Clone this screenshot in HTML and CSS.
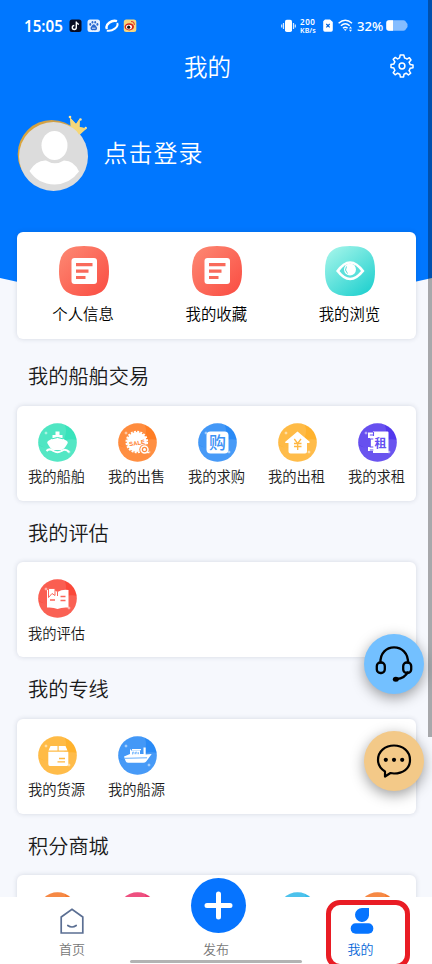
FILE: index.html
```html
<!DOCTYPE html>
<html lang="zh-CN">
<head>
<meta charset="utf-8">
<meta name="viewport" content="width=device-width, initial-scale=1">
<title>我的</title>
<link rel="stylesheet" href="styles.css">
</head>
<body>
<svg class="defs" width="0" height="0" aria-hidden="true">
  <defs>
    <linearGradient id="g-red" x1="0" y1="0" x2="1" y2="1"><stop offset="0" stop-color="#fd8a74"/><stop offset="1" stop-color="#fa4b41"/></linearGradient>
    <linearGradient id="g-teal" x1="0.1" y1="0" x2="0.9" y2="1"><stop offset="0" stop-color="#a5f5ea"/><stop offset="1" stop-color="#1ccfce"/></linearGradient>
    <linearGradient id="g-gold" x1="0" y1="0" x2="1" y2="0"><stop offset="0" stop-color="#dba53c"/><stop offset="1" stop-color="#c49a50"/></linearGradient>
    <clipPath id="orb"><circle cx="19.5" cy="19.5" r="19.3"/></clipPath>
    <symbol id="shine" viewBox="0 0 39 39">
      <g clip-path="url(#orb)" fill="#fff">
        <circle cx="11" cy="8" r="17" fill-opacity=".12"/>
        <path d="M0 39V22Q10 28 20 22Q29 14 39 17V39Z" fill-opacity=".14"/>
        <path fill-opacity=".75" d="M8 8l.5 1.500L10 10l-1.500 .5L8 12l-.5-1.500L6 10l1.500-.5zM31 27l.5 1.500L33 29l-1.500 .5L31 31l-.5-1.500L29 29l1.500-.5z"/>
      </g>
    </symbol>
    <symbol id="article" viewBox="0 0 50 50">
      <path d="M25 0C43 0 50 7 50 25S43 50 25 50 0 43 0 25 7 0 25 0Z" fill="url(#g-red)"/>
      <rect x="12.500" y="12" width="25.500" height="26" rx="3" fill="#fff"/>
      <path d="M17 17h16.500v3.200H17zM17 23.500h12.500v3.200H17zM17 30h9.500v3H17z" fill="#f96a5b"/>
    </symbol>
  </defs>
</svg>

<div class="screen">
  <header class="hero">
    <svg class="hero-curve" viewBox="0 0 432 304" preserveAspectRatio="none"><path d="M0 0H432V278Q216 329 0 278Z" fill="#0077ff"/></svg>
    <div class="status">
      <span class="clock">15:05</span>
      <svg class="apps" width="68" height="14" viewBox="0 0 68 14">
        <rect x=".5" y=".5" width="12" height="12.500" rx="2.500" fill="#080b20"/>
        <path d="M7.300 2.500v6a2 2 0 1 1-2-2M7.300 3q.5 2.200 2.700 2.400" fill="none" stroke="#fff" stroke-width="1.400"/>
        <rect x="18.500" y=".5" width="12.500" height="12.500" rx="2.500" fill="#e6f1ff"/>
        <g fill="#2868cf"><ellipse cx="21.300" cy="5.400" rx="1" ry="1.400"/><ellipse cx="23.500" cy="3.200" rx=".9" ry="1.300"/><ellipse cx="26.200" cy="3.200" rx=".9" ry="1.300"/><ellipse cx="28.400" cy="5.400" rx="1" ry="1.400"/><path d="M24.800 5.300q1.200 0 2.300 2 1.600 1.500.8 3-.8 1.300-3.100.7-2.300.6-3.100-.7-.8-1.500.8-3 1.100-2 2.300-2z"/></g>
        <path d="M23 9.200h3.500" stroke="#fff" stroke-width=".8"/>
        <g fill="none" stroke="#fff"><path d="M38 10C35.500 5.500 43 .5 48 2.200" stroke-width="2.400"/><path d="M48.200 4C50 7.500 43.500 13 37.800 11.600" stroke-width="2"/></g>
        <rect x="54.800" y=".5" width="12.500" height="12.500" rx="2.500" fill="#f7d57b"/>
        <ellipse cx="60.300" cy="7.800" rx="4.700" ry="3.600" fill="#d8261c"/><ellipse cx="60" cy="8.100" rx="3" ry="2.300" fill="#fff"/><circle cx="59.700" cy="8.200" r="1.600" fill="#111"/>
        <path d="M62 2.500q3.500-.2 3.300 3.500" fill="none" stroke="#e3442d" stroke-width="1.100"/>
      </svg>
      <span class="grow"></span>
      <svg width="15" height="14" viewBox="0 0 15 14"><rect x="4" y=".8" width="7" height="12.200" rx="1.800" fill="#fff"/><path d="M2.500 4v6M12.500 4v6M.7 5.500v3M14.300 5.500v3" stroke="#d5e9ff" stroke-width="1.200"/></svg>
      <span class="speed"><b>200</b><b>KB/s</b></span>
      <svg class="sim" width="10" height="13" viewBox="0 0 10 13"><path d="M2 .5h5L9.800 3v8a1.700 1.700 0 0 1-1.700 1.700H1.900A1.700 1.700 0 0 1 .2 11V2.200z" fill="#fff"/><path d="M3.300 5l3.400 3.400M6.700 5L3.300 8.400" stroke="#0063dc" stroke-width="1.200"/></svg>
      <svg class="wifi" width="15" height="13" viewBox="0 0 15 13"><g fill="none" stroke="#fff" stroke-width="1.500"><path d="M.6 4.200Q7.300-1.800 14 4.200M2.900 6.800q4.400-4 8.800 0M5 9.200q2.300-2 4.600 0"/></g><path d="M5.800 10.200h3L7.300 12z" fill="#fff"/><path d="M12.500 7.500l1.500 2h-3zM12.500 12.700l1.500-2h-3z" fill="#fff"/></svg>
      <span class="percent">32%</span>
      <svg class="battery" width="22" height="11" viewBox="0 0 22 11"><path d="M3 .2h14.500Q19.500.2 20 2l1.500 2v3L20 9q-.5 1.800-2.500 1.800H3Q.3 10.800.3 8V3Q.3.2 3 .2z" fill="#85bdff"/><path d="M7 .2H3Q.3.200.3 3v5q0 2.800 2.700 2.800h4z" fill="#fff"/></svg>
    </div>
    <div class="titlebar">
      <h1>我的</h1>
      <svg class="gear" width="24" height="24" viewBox="-12 -12 24 24"><path d="M-1.800-11H1.800L2.600-8Q4-7.700 5-6.900L7.400-8.300 9-6 7.100-3.700Q7.900-2.500 8.100-1.600L11-1V1.800L8.100 2.300Q7.700 3.700 7 4.700L8.700 7.200 6.400 9 4.200 7.200Q3.200 7.900 2 8.200L1.600 11H-1.600L-2.200 8.200Q-3.400 7.900-4.400 7.200L-6.800 8.800-8.800 6.700-7.100 4.400Q-7.800 3.300-8.100 2.100L-11 1.600V-1.400L-8.100-2Q-7.800-3.200-7.100-4.200L-8.800-6.600-6.700-8.600-4.400-7Q-3.500-7.700-2.400-8.100Z" fill="none" stroke="#fff" stroke-width="1.500" stroke-linejoin="round"/><circle r="2.900" fill="none" stroke="#fff" stroke-width="1.500"/></svg>
    </div>
    <div class="profile">
      <svg class="avatar" width="72" height="78" viewBox="0 0 72 78">
        <circle cx="34.700" cy="39" r="34" fill="url(#g-gold)"/>
        <path d="M48 8.700L53.500 11 53 2.500 59 9 62.800 3.500 62.500 12 69.500 13.500 61 21.500Q56 12 48 8.700Z" fill="#f5d779"/>
        <g fill="#ffe79b"><circle cx="53" cy="2" r="1.300"/><circle cx="63.500" cy="4.500" r="1.200"/><circle cx="68.700" cy="13" r="1.200"/></g>
        <circle cx="36.500" cy="41.500" r="34.500" fill="#dcdcdc"/>
        <path d="M50 7.500L54 10 53 2.500 59 9 62.800 3.500 62.500 12 69.500 13.500 62 19.500Q57 11.500 50 7.500Z" fill="#f5d779"/>
        <ellipse cx="37.500" cy="30.500" rx="13" ry="14.500" fill="#fff"/>
        <path d="M12.500 56Q19 45 29 45.500 38 51 47 45.500 57 45.500 62 56.500 53 69 37.500 69.500 21 69 12.500 56Z" fill="#fff"/>
      </svg>
      <a class="login">点击登录</a>
    </div>
  </header>

  <section class="card quick">
    <a><svg width="50" height="50"><use href="#article"/></svg>个人信息</a>
    <a><svg width="50" height="50"><use href="#article"/></svg>我的收藏</a>
    <a><svg width="50" height="50" viewBox="0 0 50 50"><path d="M25 0C43 0 50 7 50 25S43 50 25 50 0 43 0 25 7 0 25 0Z" fill="url(#g-teal)"/><path d="M11 25Q25 5.500 39.500 25 25 43.500 11 25Z" fill="#fff"/><path d="M14.500 25Q25 10.500 36 25 25 38.500 14.500 25Z" fill="#5be0db"/><circle cx="25" cy="23.500" r="6" fill="#fff"/><path d="M21.500 20.500q-2.500 3.500 1 7" fill="none" stroke="#59ddd7" stroke-width="1"/></svg>我的浏览</a>
  </section>

  <h2>我的船舶交易</h2>
  <section class="card grid">
    <a><svg width="39" height="39" viewBox="0 0 39 39"><circle cx="19.500" cy="19.500" r="19.300" fill="#38e3bb"/><use href="#shine"/><path d="M17.500 8.500h4V12h3v3.500l4.500 2.500q1.300 1 .5 2.500-3 5.500-6 6.500h-8q-3-1-6-6.500-.8-1.500.5-2.500l4.500-2.500V12h3z" fill="#fff"/><path d="M14 15.800q5.500-2.600 11 0" fill="none" stroke="#38e3bb"/><path d="M8.500 28q3-3.300 7 0 4 2.500 8 0 4-3 7.500 1" fill="none" stroke="#fff" stroke-width="2"/></svg>我的船舶</a>
    <a><svg width="39" height="39" viewBox="0 0 39 39"><circle cx="19.500" cy="19.500" r="19.300" fill="#ff7d24"/><use href="#shine"/><circle cx="18.800" cy="19" r="10" fill="#fff"/><circle cx="18.800" cy="19" r="10.300" fill="none" stroke="#fff" stroke-width="2" stroke-dasharray="2 1.240"/><text x="19" y="22" text-anchor="middle" class="sale" transform="rotate(-10 19 20)">SALE</text><circle cx="26.500" cy="26.500" r="5.200" fill="#ff8d42"/><circle cx="26.500" cy="26.500" r="3.500" fill="none" stroke="#fff" stroke-width="1.500"/><circle cx="26.500" cy="26.500" r="1.500" fill="#fff"/><path d="M28 29.500h3" stroke="#fff" stroke-width="1.300"/></svg>我的出售</a>
    <a><svg width="39" height="39" viewBox="0 0 39 39"><circle cx="19.500" cy="19.500" r="19.300" fill="#298af6"/><use href="#shine"/><rect x="8.500" y="8.500" width="22" height="22" rx="4" fill="#fff"/><text x="19.500" y="25.700" text-anchor="middle" class="glyph buy">购</text></svg>我的求购</a>
    <a><svg width="39" height="39" viewBox="0 0 39 39"><circle cx="19.500" cy="19.500" r="19.300" fill="#ffb22d"/><use href="#shine"/><path d="M19.500 8.500L32 19l-1 1h-2v8.500q0 2-2 2H12.500q-2 0-2-2V20h-3l-.5-1z" fill="#fff"/><path d="M16.300 16l3.400 4.500 3.300-4.500M16 20.500h7.500M16 23.500h7.500M19.700 20.500v6.500" fill="none" stroke="#ffb741" stroke-width="1.300"/></svg>我的出租</a>
    <a><svg width="39" height="39" viewBox="0 0 39 39"><circle cx="19.500" cy="19.500" r="19.300" fill="#5238ed"/><use href="#shine"/><path d="M10 9.500h5V8.500h14.500q1 0 1 1V30H15v-2h-5v-4h2v-9h-2z" fill="#fff"/><path d="M15.300 12h-3.500M15.300 16h-3v8h3M15.300 27h-3.500M15.500 9v4" fill="none" stroke="#6450f2" stroke-width="1.100"/><text x="22.500" y="24.500" text-anchor="middle" class="glyph rent">租</text></svg>我的求租</a>
  </section>

  <h2>我的评估</h2>
  <section class="card grid">
    <a><svg width="39" height="39" viewBox="0 0 39 39"><circle cx="19.500" cy="19.500" r="19.300" fill="#fa4839"/><use href="#shine"/><path d="M9 11q6-1.500 10.500 2 5-3 11-2v17.500q-7-.5-11 1.500-4-2-10.500-1.500z" fill="#fff"/><path d="M19.500 13v4M10.500 9.500h6.500v7l-3-2-3.500 4z" fill="#fff" stroke="#fb665b" stroke-width="1"/><path d="M12 21h5M22.500 17.500h5M22.500 21.500h5" stroke="#fb665b" stroke-width="1.400"/></svg>我的评估</a>
  </section>

  <h2>我的专线</h2>
  <section class="card grid">
    <a><svg width="39" height="39" viewBox="0 0 39 39"><circle cx="19.500" cy="19.500" r="19.300" fill="#ffb22d"/><use href="#shine"/><path d="M12.500 10h7v4.500h-9zM20.700 10h6.800l2 4.500h-8.800zM10.300 15.800h20V28q0 2-1.500 2h-17q-1.500 0-1.500-2z" fill="#fff"/><path d="M21 22.500h6M19.500 25.800h7.500" stroke="#ffb741" stroke-width="1.300"/></svg>我的货源</a>
    <a><svg width="39" height="39" viewBox="0 0 39 39"><circle cx="19.500" cy="19.500" r="19.300" fill="#298af6"/><use href="#shine"/><path d="M6 20.500l6-2.500V13.500h1V14.500h9V18h3.500v-6.500h2.200v7l6-.5-5.500 7.500q-1 1.300-3 1.300H10q-2 0-2.500-2zM14 13h9v1.200h-9z" fill="#fff"/><path d="M6.500 22.300l22.500-.5" stroke="#64aefd"/><path d="M14.500 18.500V16.200h1.500v2m1.500 0v-2H19v2m1.500 0v-2" fill="none" stroke="#64aefd" stroke-width=".8"/></svg>我的船源</a>
  </section>

  <h2>积分商城</h2>
  <section class="card grid">
    <a><svg width="39" height="39" viewBox="0 0 39 39"><circle cx="19.500" cy="19.500" r="19.300" fill="#f5792c"/><use href="#shine"/></svg></a>
    <a><svg width="39" height="39" viewBox="0 0 39 39"><circle cx="19.500" cy="19.500" r="19.300" fill="#ec386f"/><use href="#shine"/></svg></a>
    <a></a>
    <a><svg width="39" height="39" viewBox="0 0 39 39"><circle cx="19.500" cy="19.500" r="19.300" fill="#35baea"/><use href="#shine"/></svg></a>
    <a><svg width="39" height="39" viewBox="0 0 39 39"><circle cx="19.500" cy="19.500" r="19.300" fill="#f5792c"/><use href="#shine"/></svg></a>
  </section>

  <div class="float service"><svg width="60" height="60" viewBox="0 0 60 60" fill="none" stroke="#000" stroke-width="2.300"><path d="M16.500 29.500C15 8 45 8 44 29.500M44 37.500Q41 44.500 32.500 45"/><rect x="12.800" y="28.500" width="8" height="10.500" rx="3.600"/><rect x="39.200" y="28.500" width="8" height="10.500" rx="3.600"/><ellipse cx="31.800" cy="45.200" rx="3" ry="2.500" fill="#000" stroke="none"/></svg></div>
  <div class="float chat"><svg width="60" height="60" viewBox="0 0 60 60"><path d="M21 40.500Q14 36 14 29C14 20 21.500 14.500 30 14.500S46 20 46 29 38.500 42.500 30 42.500L26.500 42 21 45.500Z" fill="none" stroke="#000" stroke-width="2.200" stroke-linejoin="round"/><circle cx="21.800" cy="28.800" r="2.100"/><circle cx="30" cy="28.800" r="2.100"/><circle cx="38.200" cy="28.800" r="2.100"/></svg></div>

  <nav class="tabs">
    <a><svg width="28" height="28" viewBox="0 0 28 28" fill="none" stroke="#5b6f93" stroke-width="1.700"><path d="M3.200 26V10L14 2.200 24.800 10V26Z"/><path d="M9.800 18.500q4.200 3 8.400 0" stroke-linecap="round"/></svg>首页</a>
    <a><span class="plus"><svg width="55" height="55" viewBox="0 0 55 55"><path d="M27.500 16v23M16 27.500h23" stroke="#fff" stroke-width="5" stroke-linecap="round"/></svg></span>发布</a>
    <a class="active"><svg width="28" height="28" viewBox="0 0 28 28" fill="#0674ff"><path d="M15.500 1H22V8.500A7 7 0 1 1 15.500 1Z"/><rect x="3.700" y="16.300" width="22.600" height="10.500" rx="5"/></svg>我的</a>
  </nav>
  <div class="home-bar"></div>
  <div class="marker"></div>
  <div class="scrollbar"></div>
</div>
</body>
</html>
```

FILE: styles.css
```css
* { box-sizing: border-box; }

body {
  margin: 0;
  background: #f6f8fd;
  color: #1a1a1a;
  font-family: "Noto Sans CJK SC", sans-serif;
  font-weight: 350;
}

.defs { position: absolute; }
svg { display: block; flex: none; }

.screen {
  position: relative;
  width: 432px;
  height: 964px;
  overflow: hidden;
}

.hero {
  position: relative;
  height: 231.500px;
  color: #fff;
}

.hero-curve {
  position: absolute;
  top: 0;
  left: 0;
  width: 432px;
  height: 304px;
}

.status {
  position: relative;
  display: flex;
  align-items: center;
  height: 51px;
  padding: 0 24px;
  font-family: "Noto Sans", sans-serif;
  font-weight: 500;
}

.clock { width: 45px; font-size: 15.200px; font-weight: 600; }
.grow { flex: 1; }
.speed { display: flex; flex-direction: column; gap: 1px; width: 19px; margin: 0 4px 0 4px; }
.speed b { font-size: 8px; line-height: 8px; font-weight: 600; letter-spacing: .6px; }
.speed b + b { font-size: 7px; line-height: 7px; letter-spacing: .1px; }
.wifi { margin-left: 5px; }
.percent { width: 26px; margin: 0 3px 0 4px; font-size: 13.200px; white-space: nowrap; }

.titlebar {
  position: relative;
  display: flex;
  align-items: center;
  justify-content: flex-end;
  height: 31px;
  padding-right: 18px;
}

.titlebar h1 {
  flex: 1;
  margin: 0;
  padding-left: 25px;
  font-size: 23.500px;
  font-weight: 350;
  line-height: 31px;
  text-align: center;
}

.gear { margin-top: -2px; }

.profile {
  position: relative;
  display: flex;
  align-items: center;
  gap: 15px;
  margin-top: 33px;
  padding-left: 16.500px;
}

.login { margin-top: -4px; font-size: 24px; letter-spacing: 1px; line-height: 32px; }

.card {
  position: relative;
  width: 399.500px;
  margin-left: 16.500px;
  border-radius: 6px;
  background: #fff;
  box-shadow: 0 0 5px rgba(40, 50, 80, .16);
}

.quick {
  display: grid;
  grid-template-columns: repeat(3, 133.200px);
  height: 107.500px;
  padding-top: 14.500px;
  color: #000;
  font-size: 15.400px;
  line-height: 22px;
}

.card a {
  display: flex;
  flex-direction: column;
  align-items: center;
}

.quick a { gap: 6px; }
.quick svg { margin-left: 2px; }

h2 {
  margin: 21px 0 14.500px 28px;
  font-size: 20.200px;
  font-weight: 350;
  line-height: 31px;
}

.grid {
  display: grid;
  grid-template-columns: repeat(5, 80px);
  height: 95px;
  padding-top: 17px;
  font-size: 14.300px;
  line-height: 20px;
}

.grid + h2 { margin-top: 16px; }
.grid a { gap: 4.500px; }
.grid a > svg { margin-left: 2px; }

.sale { font: 700 6px "Liberation Sans", sans-serif; fill: #ff8130; }
.glyph { font-family: "Noto Sans CJK SC", sans-serif; font-weight: 700; }
.buy { font-size: 17px; font-weight: 500; fill: #3c92f5; }
.rent { font-size: 12px; fill: #6450f2; }

.float {
  position: absolute;
  left: 363.500px;
  width: 60px;
  height: 60px;
  border-radius: 50%;
  box-shadow: 0 4px 14px rgba(0, 0, 0, .38);
}

.service { top: 634px; background: #73c0ff; }
.chat { top: 730.500px; background: #f3c988; }

.tabs {
  position: absolute;
  bottom: 0;
  left: 0;
  display: grid;
  grid-template-columns: repeat(3, 144px);
  width: 100%;
  height: 67px;
  background: #fff;
  color: #777;
  font-size: 13px;
  line-height: 18px;
}

.tabs a {
  position: relative;
  display: flex;
  flex-direction: column;
  align-items: center;
  gap: 5px;
  padding-top: 10px;
}

.tabs a:nth-child(2) { padding-top: 43px; }
.tabs .active { padding-left: 1px; color: #0868d8; }

.plus {
  position: absolute;
  top: -19px;
  left: 46.500px;
  width: 55px;
  height: 55px;
  border-radius: 50%;
  background: #0674ff;
}

.home-bar {
  position: absolute;
  bottom: 1px;
  left: 130px;
  width: 172px;
  height: 3px;
  border-radius: 2px;
  background: #b3b3b3;
}

.marker {
  position: absolute;
  top: 900px;
  left: 326px;
  width: 84px;
  height: 69px;
  border: 5px solid #e91c24;
  border-radius: 14px;
}

.scrollbar {
  position: absolute;
  top: 0;
  right: 0;
  width: 4px;
  height: 737px;
  background: rgba(0, 0, 0, .32);
}
```
